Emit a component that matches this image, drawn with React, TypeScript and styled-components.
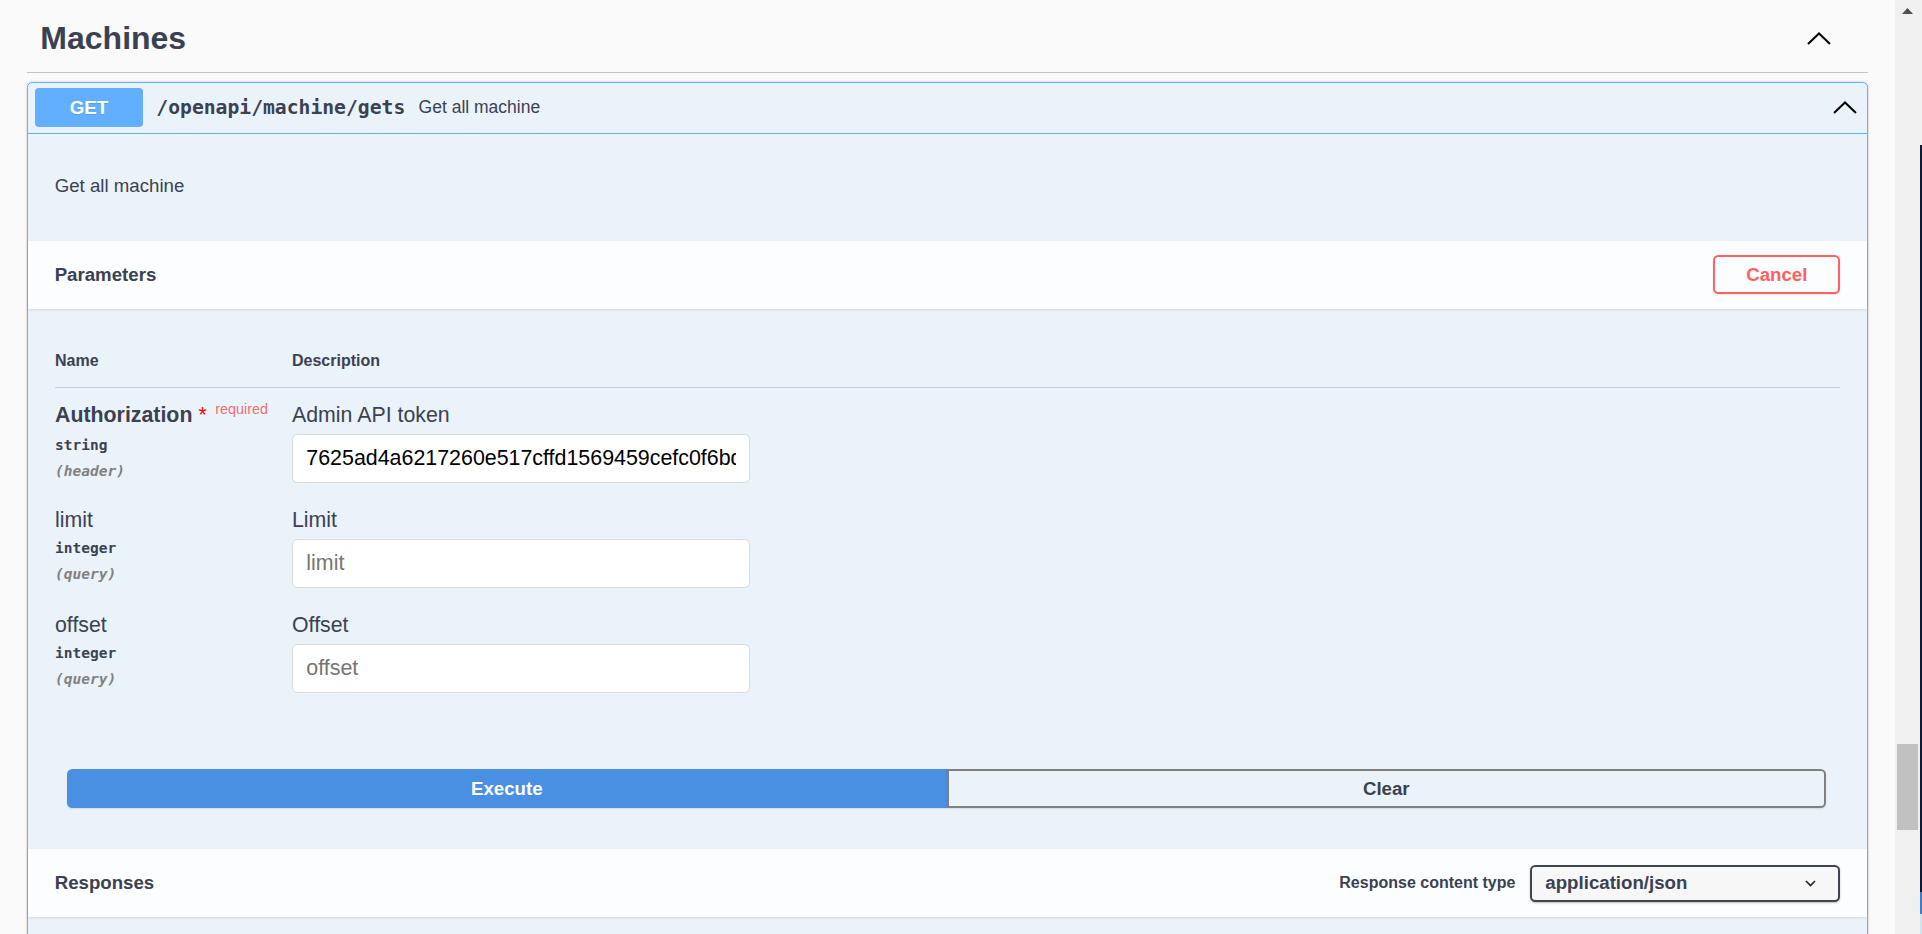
import styled, { createGlobalStyle } from "styled-components";

const GlobalStyle = createGlobalStyle`
	html, body {
		margin: 0;
		padding: 0;
		height: 100%;
		overflow: hidden;
		background: #fafafa;
	}
	body {
		font-family: "Liberation Sans", Arial, sans-serif;
		color: #3b4151;
	}
	* {
		box-sizing: border-box;
	}
`;

const Screen = styled.div`
	display: flex;
	height: 100vh;
	width: 100vw;
	overflow: hidden;
`;

const Page = styled.div`
	flex: 1;
	min-width: 0;
	overflow: hidden;
	background: #fafafa;
`;

const Wrapper = styled.div`
	padding: 0 27px;
`;

const TagHeading = styled.div`
	height: 73px;
	padding: 5px 37px 0 13.33px;
	display: flex;
	align-items: center;
	justify-content: space-between;
	border-bottom: 1px solid rgba(59, 65, 81, 0.3);
	margin-bottom: 9px;
`;

const TagTitle = styled.h3`
	margin: 0;
	font-size: 32px;
	font-weight: 700;
	line-height: 1.2;
	color: #3b4151;
`;

const Opblock = styled.div`
	border: 1px solid #61affe;
	border-radius: 5.33px;
	background: #ebf3fa;
	box-shadow: 0 0 3px rgba(0, 0, 0, 0.19);
`;

const Summary = styled.div`
	display: flex;
	align-items: center;
	padding: 5.33px 10px 5.33px 7px;
	border-bottom: 1px solid #61affe;
`;

const MethodBadge = styled.span`
	display: flex;
	align-items: center;
	justify-content: center;
	width: 108px;
	height: 39px;
	border-radius: 4px;
	background: #61affe;
	color: #fff;
	font-size: 18.67px;
	font-weight: 700;
	text-shadow: 0 1px 0 rgba(0, 0, 0, 0.1);
`;

const PathText = styled.span`
	padding: 0 13.33px;
	font-family: "DejaVu Sans Mono", "Liberation Mono", monospace;
	font-size: 19.7px;
	font-weight: 700;
	color: #3b4151;
`;

const SummaryDesc = styled.span`
	flex: 1;
	font-size: 17.5px;
	color: #3b4151;
`;

const ArrowButton = styled.span`
	display: flex;
	align-items: center;
	color: #000;
`;

const DescriptionBlock = styled.div`
	padding: 18px 26.67px 22px;
	p {
		margin: 20px 0;
		font-size: 18.67px;
		line-height: 27px;
	}
`;

const SectionHeader = styled.div`
	height: 68px;
	padding: 0 26.67px;
	display: flex;
	align-items: center;
	justify-content: space-between;
	background: rgba(255, 255, 255, 0.8);
	box-shadow: 0 1px 2px rgba(0, 0, 0, 0.1);
`;

const SectionTitle = styled.h4`
	margin: 0;
	font-size: 18.67px;
	font-weight: 700;
`;

const CancelButton = styled.button`
	font-family: inherit;
	font-size: 18.67px;
	font-weight: 700;
	line-height: normal;
	color: #ff6060;
	background: transparent;
	border: 2px solid #ff6060;
	border-radius: 5.33px;
	padding: 6.67px 31px;
	box-shadow: 0 1px 2px rgba(0, 0, 0, 0.1);
`;

const TableContainer = styled.div`
	padding: 27px 27px 25px;
`;

const ParamGrid = styled.div`
	display: grid;
	grid-template-columns: 237px 1fr;
`;

const HeadCell = styled.div`
	padding: 16.5px 0 16.5px;
	font-size: 16px;
	font-weight: 700;
	line-height: 18.4px;
	border-bottom: 1px solid rgba(59, 65, 81, 0.2);
`;

const Cell = styled.div`
	height: 105px;
	padding-top: 14.5px;
`;

const ParamName = styled.div<{ $required?: boolean }>`
	font-size: 21.33px;
	line-height: 24px;
	font-weight: ${(p) => (p.$required ? 700 : 400)};
	white-space: nowrap;
`;

const Star = styled.span`
	color: red;
	font-weight: 400;
`;

const RequiredTag = styled.span`
	position: relative;
	top: -8px;
	padding: 0 6.67px 0 8.5px;
	font-size: 14.4px;
	font-weight: 400;
	color: rgba(255, 0, 0, 0.6);
`;

const ParamType = styled.div`
	padding: 6.67px 0;
	font-family: "DejaVu Sans Mono", "Liberation Mono", monospace;
	font-size: 14.5px;
	font-weight: 700;
	line-height: 20px;
`;

const ParamIn = styled.div`
	font-family: "DejaVu Sans Mono", "Liberation Mono", monospace;
	font-size: 14.5px;
	font-style: italic;
	font-weight: 700;
	line-height: 18px;
	color: #808080;
`;

const ParamDesc = styled.div`
	font-size: 21.33px;
	line-height: 24px;
`;

const TextInput = styled.input`
	display: block;
	margin-top: 7px;
	width: 458px;
	height: 49px;
	padding: 0 13.33px;
	font-family: "Liberation Sans", Arial, sans-serif;
	font-size: 21.4px;
	color: #000;
	background: #fff;
	border: 1px solid #d9d9d9;
	border-radius: 5.33px;
	outline: none;
	&::placeholder {
		color: #767676;
	}
`;

const ButtonGroup = styled.div`
	display: flex;
	padding: 41px 41px 41px 39px;
`;

const ExecuteButton = styled.button`
	flex: 1;
	height: 39px;
	font-family: inherit;
	font-size: 18.67px;
	font-weight: 700;
	color: #fff;
	background: #4990e2;
	border: 2px solid #4990e2;
	border-radius: 5.33px 0 0 5.33px;
	box-shadow: 0 1px 2px rgba(0, 0, 0, 0.1);
`;

const ClearButton = styled.button`
	flex: 1;
	height: 39px;
	font-family: inherit;
	font-size: 18.67px;
	font-weight: 700;
	color: #3b4151;
	background: transparent;
	border: 2px solid #808080;
	border-radius: 0 5.33px 5.33px 0;
	box-shadow: 0 1px 2px rgba(0, 0, 0, 0.1);
`;

const MediaType = styled.div`
	display: flex;
	align-items: center;
	gap: 15px;
`;

const MediaLabel = styled.span`
	font-size: 16px;
	font-weight: 700;
`;

const SelectBox = styled.div`
	width: 310px;
	height: 37px;
	display: flex;
	align-items: center;
	justify-content: space-between;
	padding: 0 22px 0 13px;
	font-size: 18.67px;
	font-weight: 700;
	background: #f7f7f7;
	border: 2px solid #41444e;
	border-radius: 5.33px;
	box-shadow: 0 1px 2px rgba(0, 0, 0, 0.25);
`;

const ResponsesBody = styled.div`
	height: 60px;
`;

const Scrollbar = styled.div`
	width: 25px;
	display: flex;
	flex-direction: column;
	align-items: center;
	background: #f0f0f0;
	padding-top: 8px;
`;

const Thumb = styled.div`
	width: 21px;
	height: 86px;
	margin-top: 730px;
	background: #c1c1c1;
`;

const EdgeStrip = styled.div`
	width: 2px;
	background: linear-gradient(
		to bottom,
		#f0f0f0 0 145px,
		#0b1a3b 145px 892px,
		#3d7cc9 892px 914px,
		#d0e4f0 914px
	);
`;

function Chevron({ size = 24 }: { size?: number }) {
	return (
		<svg width={size} height={13} viewBox="0 0 24 13">
			<polyline points="1,12 12,1.5 23,12" fill="none" stroke="#000" strokeWidth="2" />
		</svg>
	);
}

interface IParam {
	name: string;
	type: string;
	where: string;
	description: string;
	required?: boolean;
	value?: string;
}

const params: IParam[] = [
	{
		name: "Authorization",
		type: "string",
		where: "header",
		description: "Admin API token",
		required: true,
		value: "7625ad4a6217260e517cffd1569459cefc0f6bd24a7e",
	},
	{ name: "limit", type: "integer", where: "query", description: "Limit" },
	{ name: "offset", type: "integer", where: "query", description: "Offset" },
];

function App() {
	return (
		<Screen>
			<GlobalStyle />
			<Page>
				<Wrapper>
					<TagHeading>
						<TagTitle>Machines</TagTitle>
						<ArrowButton>
							<Chevron />
						</ArrowButton>
					</TagHeading>
					<Opblock>
						<Summary>
							<MethodBadge>GET</MethodBadge>
							<PathText>/openapi/machine/gets</PathText>
							<SummaryDesc>Get all machine</SummaryDesc>
							<ArrowButton>
								<Chevron />
							</ArrowButton>
						</Summary>
						<DescriptionBlock>
							<p>Get all machine</p>
						</DescriptionBlock>
						<SectionHeader>
							<SectionTitle>Parameters</SectionTitle>
							<CancelButton>Cancel</CancelButton>
						</SectionHeader>
						<TableContainer>
							<ParamGrid>
								<HeadCell>Name</HeadCell>
								<HeadCell>Description</HeadCell>
								{params.map((param) => [
									<Cell key={param.name + "-n"}>
										<ParamName $required={param.required}>
											{param.name}
											{param.required && (
												<>
													{" "}
													<Star>*</Star>
													<RequiredTag>required</RequiredTag>
												</>
											)}
										</ParamName>
										<ParamType>{param.type}</ParamType>
										<ParamIn>({param.where})</ParamIn>
									</Cell>,
									<Cell key={param.name + "-d"}>
										<ParamDesc>{param.description}</ParamDesc>
										<TextInput
											defaultValue={param.value}
											placeholder={param.name}
										/>
									</Cell>,
								])}
							</ParamGrid>
						</TableContainer>
						<ButtonGroup>
							<ExecuteButton>Execute</ExecuteButton>
							<ClearButton>Clear</ClearButton>
						</ButtonGroup>
						<SectionHeader>
							<SectionTitle>Responses</SectionTitle>
							<MediaType>
								<MediaLabel>Response content type</MediaLabel>
								<SelectBox>
									application/json
									<svg width="11" height="7" viewBox="0 0 11 7">
										<polyline
											points="1,1 5.5,5.5 10,1"
											fill="none"
											stroke="#222"
											strokeWidth="1.6"
										/>
									</svg>
								</SelectBox>
							</MediaType>
						</SectionHeader>
						<ResponsesBody />
					</Opblock>
				</Wrapper>
			</Page>
			<Scrollbar>
				<svg width="11" height="6" viewBox="0 0 11 6">
					<polygon points="0,6 5.5,0 11,6" fill="#505050" />
				</svg>
				<Thumb />
			</Scrollbar>
			<EdgeStrip />
		</Screen>
	);
}

export default App;
